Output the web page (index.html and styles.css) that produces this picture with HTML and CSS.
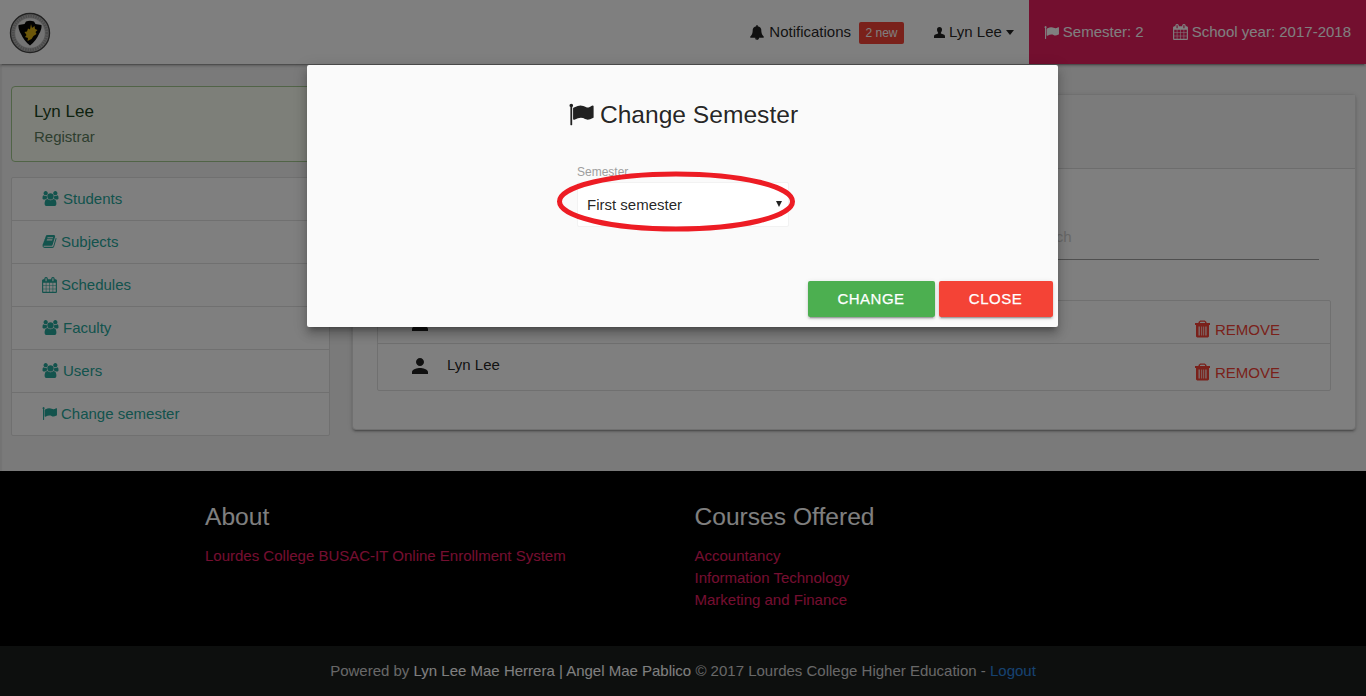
FILE: index.html
```
<!DOCTYPE html>
<html lang="en">
<head>
<meta charset="utf-8">
<title>Enrollment System</title>
<link rel="stylesheet" href="styles.css">
</head>
<body>
<svg class="sprite" aria-hidden="true">
  <symbol id="flag" viewBox="64 0 1792 1792"><path d="M320 256q0 72-64 110v1266q0 13-9.500 22.500t-22.500 9.500h-64q-13 0-22.500-9.500t-9.500-22.500v-1266q-64-38-64-110 0-53 37.500-90.500t90.500-37.500 90.500 37.500 37.500 90.500zM1792 320v763q0 25-12.500 38.500t-39.500 27.500q-215 116-369 116-61 0-123.500-22t-108.500-48-115.500-48-142.500-22q-192 0-464 146-17 9-33 9-26 0-45-19t-19-45v-742q0-32 31-55 21-14 79-43 236-120 421-120 107 0 200 29t219 88q38 19 88 19 54 0 117.500-21t110-47 88-47 54.500-21q26 0 45 19t19 45z"/></symbol>
  <symbol id="calendar" viewBox="64 0 1664 1792"><path d="M192 1664h288v-288h-288v288zm352 0h320v-288h-320v288zm-352-352h288v-320h-288v320zm352 0h320v-320h-320v320zm-352-384h288v-288h-288v288zm736 736h320v-288h-320v288zm-384-736h320v-288h-320v288zm768 736h288v-288h-288v288zm-384-352h320v-320h-320v320zm-352-864v-288q0-13-9.500-22.500t-22.500-9.500h-64q-13 0-22.500 9.500t-9.500 22.500v288q0 13 9.500 22.500t22.500 9.500h64q13 0 22.500-9.500t9.500-22.500zm736 864h288v-320h-288v320zm-384-384h320v-288h-320v288zm384 0h288v-288h-288v288zm32-480v-288q0-13-9.500-22.500t-22.500-9.500h-64q-13 0-22.500 9.500t-9.500 22.500v288q0 13 9.500 22.500t22.500 9.500h64q13 0 22.500-9.500t9.500-22.500zm384-64v1280q0 52-38 90t-90 38h-1408q-52 0-90-38t-38-90v-1280q0-52 38-90t90-38h128v-96q0-66 47-113t113-47h64q66 0 113 47t47 113v96h384v-96q0-66 47-113t113-47h64q66 0 113 47t47 113v96h128q52 0 90 38t38 90z"/></symbol>
  <symbol id="users" viewBox="0 0 1920 1792"><path d="M593 896q-162 5-265 128h-134q-82 0-138-40.500t-56-118.500q0-353 124-353 6 0 43.500 21t97.500 42.500 119 21.500q67 0 133-23-5 37-5 66 0 139 81 256zm1071 637q0 120-73 189.500t-194 69.500h-874q-121 0-194-69.500t-73-189.500q0-53 3.500-103.500t14-109 26.500-108.500 43-97.500 62-81 85.500-53.500 111.500-20q10 0 43 21.500t73 48 107 48 135 21.500 135-21.500 107-48 73-48 43-21.500q61 0 111.500 20t85.500 53.500 62 81 43 97.500 26.500 108.500 14 109 3.500 103.500zm-1024-1277q0 106-75 181t-181 75-181-75-75-181 75-181 181-75 181 75 75 181zm704 384q0 159-112.500 271.500t-271.500 112.500-271.500-112.500-112.500-271.500 112.500-271.500 271.500-112.500 271.500 112.500 112.500 271.500zm576 225q0 78-56 118.500t-138 40.500h-134q-103-123-265-128 81-117 81-256 0-29-5-66 66 23 133 23 59 0 119-21.500t97.500-42.500 43.500-21q124 0 124 353zm-128-609q0 106-75 181t-181 75-181-75-75-181 75-181 181-75 181 75 75 181z"/></symbol>
  <symbol id="book" viewBox="64 0 1664 1792"><path d="M1703 478q40 57 18 129l-275 906q-19 64-76.500 107.500t-122.500 43.500h-923q-77 0-148.500-53.500t-99.500-131.500q-24-67-2-127 0-4 3-27t4-37q1-8-3-21.500t-3-19.500q2-11 8-21t16.500-23.500 16.500-23.500q23-38 45-91.500t30-91.500q3-10 .5-30t-.5-28q3-11 17-28t17-23q21-36 42-92t25-90q1-9-2.500-32t.5-28q4-13 22-30.500t22-22.500q19-26 42.500-84.500t27.500-96.500q1-8-3-25.500t-2-26.500q2-8 9-18t18-23 17-21q8-12 16.500-30.500t15-35 16-36 19.500-32 26.500-23.500 36-11.500 47.500 5.500l-1 3q38-9 51-9h761q74 0 114 56t18 130l-274 906q-36 119-71.500 153.500t-128.500 34.500h-869q-27 0-38 15-11 16-1 43 24 70 144 70h923q29 0 56-15.500t35-41.500l300-987q7-22 5-57 38 15 59 43zm-1064 2q-4 13 2 22.500t20 9.500h608q13 0 25.500-9.500t16.500-22.500l21-64q4-13-2-22.500t-20-9.500h-608q-13 0-25.500 9.500t-16.500 22.500zm-83 256q-4 13 2 22.500t20 9.500h608q13 0 25.500-9.500t16.500-22.500l21-64q4-13-2-22.500t-20-9.500h-608q-13 0-25.500 9.500t-16.500 22.500z"/></symbol>
  <symbol id="bell" viewBox="64 0 1664 1792"><path d="M912 1696q0-16-16-16-59 0-101.500-42.500t-42.500-101.500q0-16-16-16t-16 16q0 73 51.500 124.500t124.500 51.500q16 0 16-16zm816-288q0 52-38 90t-90 38h-448q0 106-75 181t-181 75-181-75-75-181h-448q-52 0-90-38t-38-90q50-42 91-88t85-119.500 74.500-158.500 50-206 19.500-260q0-152 117-282.500t307-158.500q-8-19-8-39 0-40 28-68t68-28 68 28 28 68q0 20-8 39 190 28 307 158.500t117 282.500q0 139 19.500 260t50 206 74.500 158.500 85 119.500 91 88z"/></symbol>
  <symbol id="user" viewBox="0 0 11 11"><path d="M5.500 0C7.200 0 8 1.100 8 2.600c0 1.400-.5 2.500-1.100 3.100v.8l2.700 1C10.600 7.900 11 8.500 11 9.500V11H0V9.500c0-1 .4-1.600 1.400-2l2.700-1v-.8C3.500 5.100 3 4 3 2.600 3 1.100 3.800 0 5.500 0z"/></symbol>
  <symbol id="person" viewBox="0 0 24 24"><path d="M12 12c2.210 0 4-1.790 4-4s-1.790-4-4-4-4 1.790-4 4 1.790 4 4 4zm0 2c-2.670 0-8 1.340-8 4v2h16v-2c0-2.660-5.330-4-8-4z"/></symbol>
  <symbol id="trash" viewBox="0 0 15 18"><path fill-rule="evenodd" d="M3.500 3V2L5.200.4h4.600L11.500 2v1H15v2h-1v11.400l-1.100 1.100H2.100L1 16.400V5H0V3zM5 3h5v-.7l-.7-.6H5.700l-.7.600zM3.600 6.500v9h1.100v-9zm2.800 0v9h.7v-9zm2 0v9h.7v-9zm2 0v9h1.100v-9z"/></symbol>
</svg>

<header class="navbar">
  <svg class="logo" viewBox="0 0 42 42">
    <circle cx="21" cy="21" r="19.500" fill="#b8b8b8" stroke="#454545" stroke-width="1.400"/>
    <circle cx="21" cy="21" r="17" fill="none" stroke="#989898" stroke-width="3" stroke-dasharray="1.500 1"/>
    <circle cx="21" cy="21" r="14.800" fill="#e6e6e6"/>
    <path d="M17 9.500q4-1.500 8 0l1.500 2.500 6 1q.5 4-2.500 9-3 7-9 11.500Q15 29 12 22q-3-5-2.500-9l6-1z" fill="#050505"/>
    <path d="m22 12 1 4 2.500-2 .5 3 2.500 1-2 2 1 2-3 2-2 3-4 2 .5-3-3-1 1.500-2-2-3 2.500-.5 1-3 2 1z" fill="#d9ae13"/>
  </svg>
  <nav class="nav">
    <a class="nav-item notify"><svg class="i-bell"><use href="#bell"/></svg>Notifications<span class="badge">2 new</span></a>
    <a class="nav-item"><svg class="i-user"><use href="#user"/></svg>Lyn Lee<span class="caret"></span></a>
    <a class="nav-item pink"><svg class="i-flag"><use href="#flag"/></svg>Semester: 2</a>
    <a class="nav-item pink year"><svg class="i-cal"><use href="#calendar"/></svg>School year: 2017-2018</a>
  </nav>
</header>

<main class="main">
  <aside class="side">
    <div class="profile">
      <div class="profile-name">Lyn Lee</div>
      <div class="profile-role">Registrar</div>
    </div>
    <div class="menu">
      <a class="menu-item"><svg class="i-users"><use href="#users"/></svg>Students</a>
      <a class="menu-item"><svg class="i-book"><use href="#book"/></svg>Subjects</a>
      <a class="menu-item"><svg class="i-cal"><use href="#calendar"/></svg>Schedules</a>
      <a class="menu-item"><svg class="i-users"><use href="#users"/></svg>Faculty</a>
      <a class="menu-item"><svg class="i-users"><use href="#users"/></svg>Users</a>
      <a class="menu-item"><svg class="i-flag"><use href="#flag"/></svg>Change semester</a>
    </div>
  </aside>
  <section class="card">
    <div class="card-head"></div>
    <div class="card-body">
      <div class="search">Search</div>
      <div class="list">
        <div class="row"><svg class="i-person"><use href="#person"/></svg><span class="row-name"></span><a class="remove"><svg class="i-trash"><use href="#trash"/></svg><span>REMOVE</span></a></div>
        <div class="row last"><svg class="i-person"><use href="#person"/></svg><span class="row-name">Lyn Lee</span><a class="remove"><svg class="i-trash"><use href="#trash"/></svg><span>REMOVE</span></a></div>
      </div>
    </div>
  </section>
</main>

<footer class="footer">
  <div class="footer-cols">
    <div>
      <h5 class="footer-title">About</h5>
      <a class="footer-link">Lourdes College BUSAC-IT Online Enrollment System</a>
    </div>
    <div>
      <h5 class="footer-title">Courses Offered</h5>
      <a class="footer-link">Accountancy</a>
      <a class="footer-link">Information Technology</a>
      <a class="footer-link">Marketing and Finance</a>
    </div>
  </div>
  <div class="copyright"><p>Powered by <span class="names">Lyn Lee Mae Herrera | Angel Mae Pablico</span> © 2017 Lourdes College Higher Education - <a class="logout">Logout</a></p></div>
</footer>

<div class="overlay"></div>
<div class="modal">
  <h4 class="modal-title"><svg class="i-flag-lg"><use href="#flag"/></svg>Change Semester</h4>
  <div class="field">
    <div class="label">Semester</div>
    <div class="select"><span>First semester</span><span class="arrow"></span></div>
  </div>
  <div class="actions"><a class="btn green">CHANGE</a><a class="btn red">CLOSE</a></div>
  <svg class="ring" viewBox="0 0 240 62"><ellipse cx="120" cy="31.500" rx="116.500" ry="27.500"/></svg>
</div>
</body>
</html>
```
FILE: styles.css
```
* { box-sizing: border-box; }
body {
  margin: 0;
  height: 696px;
  overflow: hidden;
  background: #f4f4f4;
  color: rgba(0, 0, 0, .87);
  font: 15px/22px "Liberation Sans", Arial, sans-serif;
}
svg { fill: currentColor; flex: none; display: block; }
.sprite { position: absolute; width: 0; height: 0; }

.i-bell { width: 14px; height: 15px; margin-right: 5px; }
.i-user { width: 11px; height: 11px; margin-right: 4px; }
.i-flag { width: 16px; height: 15px; margin-right: 3px; }
.i-cal { width: 15px; height: 16px; margin-right: 4px; }
.i-book { width: 15px; height: 15px; margin-right: 4px; }
.i-users { width: 17px; height: 15px; margin-right: 4px; }
.i-person { width: 24px; height: 24px; }
.i-trash { width: 15px; height: 18px; margin-right: 5px; }
.i-flag-lg { width: 26px; height: 25px; margin-right: 5px; }

/* Top bar */
.navbar {
  position: relative;
  display: flex;
  justify-content: space-between;
  height: 64px;
  padding-left: 9px;
  background: #fff;
  box-shadow: 0 2px 2px 0 rgba(0,0,0,.14), 0 1px 5px 0 rgba(0,0,0,.12), 0 3px 1px -2px rgba(0,0,0,.2);
}
.logo { width: 42px; height: 42px; margin-top: 12px; }
.nav { display: flex; }
.nav-item { display: flex; align-items: center; padding: 0 15px; }
.pink { background: #e61e5f; color: #fff; }
.year { padding-left: 14px; }
.badge {
  width: 45px;
  height: 22px;
  margin: 1px 0 0 8px;
  border-radius: 2px;
  background: #f44336;
  color: #fff;
  font-size: 12px;
  text-align: center;
}
.caret { margin-left: 4px; border: 4.500px solid transparent; border-top: 5px solid currentColor; border-bottom: 0; }

/* Page body */
.main {
  display: flex;
  gap: 22px;
  height: 407px;
  padding: 22px 10px 0 11px;
  box-shadow: inset 2px 0 1px rgba(0,0,0,.05);
}
.side { width: 319px; }
.profile {
  height: 76px;
  padding: 13px 22px;
  border: 1px solid #a3c98f;
  border-radius: 4px;
  background: #fbfff3;
  color: #5b7c5d;
}
.profile-name { color: #1b4420; font-size: 17px; line-height: 24px; margin-bottom: 2px; }
.menu { margin-top: 15px; border: 1px solid #e0e0e0; border-radius: 2px; background: #fff; }
.menu-item {
  display: flex;
  align-items: center;
  height: 43px;
  padding: 0 30px;
  border-bottom: 1px solid #e0e0e0;
  color: #26a69a;
}
.menu-item svg { margin-bottom: 1px; }
.menu-item:last-child { height: 42px; padding-bottom: 1px; border-bottom: 0; }
.card {
  flex: 1;
  height: 336px;
  margin-top: 8px;
  border: 1px solid #e0e0e0;
  border-radius: 4px;
  background: #fff;
  box-shadow: 0 2px 2px 0 rgba(0,0,0,.14), 0 1px 5px 0 rgba(0,0,0,.12), 0 3px 1px -2px rgba(0,0,0,.2);
}
.card-head { height: 74px; border-bottom: 1px solid #dadada; background: #f7f7f7; }
.card-body { padding: 46px 24px 0; }
.search {
  width: 296px;
  height: 45px;
  margin: 0 12px 40px auto;
  padding-left: 1px;
  border-bottom: 1px solid #9e9e9e;
  color: #d1d1d1;
  line-height: 43px;
}
.list { border: 1px solid #e0e0e0; border-radius: 2px; }
.row { display: flex; height: 43px; padding: 10px 50px 0 30px; border-bottom: 1px solid #e0e0e0; }
.last { height: 46px; border-bottom: 0; }
.row-name { flex: 1; padding-left: 15px; }
.remove { display: flex; height: 18px; margin-top: 9px; align-items: center; color: #f44336; }
.remove span { padding-top: 2px; }

/* Footer */
.footer { height: 225px; background: #000; color: #fff; }
.footer-cols { display: grid; grid-template-columns: 489.500px 1fr; height: 175px; padding: 32px 205px 0; }
.footer-title { margin: 0 0 15px; font-size: 24.600px; line-height: 27px; font-weight: 400; }
.footer-link { display: block; color: #e91e63; }
.copyright { height: 50px; background: #1a1e1d; color: #d0d0d0; text-align: center; line-height: 50px; }
.copyright p { margin: 0; }
.names { color: #fff; }
.logout { color: #2c86e0; }

/* Dialog */
.overlay { position: absolute; inset: 0; background: #000; opacity: .5; }
.modal {
  position: absolute;
  left: 307px;
  top: 65px;
  width: 751px;
  height: 262px;
  border-radius: 2px;
  background: #fafafa;
  box-shadow: 0 8px 10px 1px rgba(0,0,0,.14), 0 3px 14px 2px rgba(0,0,0,.12), 0 5px 5px -3px rgba(0,0,0,.3);
}
.modal-title {
  display: flex;
  align-items: center;
  justify-content: center;
  margin: 36px 0 0;
  padding-left: 2px;
  font-size: 24.600px;
  line-height: 27px;
  font-weight: 400;
}
.field { width: 212px; margin: 36px 0 0 270px; }
.label { color: #9e9e9e; font-size: 12px; line-height: 16px; }
.select {
  display: flex;
  align-items: center;
  justify-content: space-between;
  height: 45px;
  margin-top: 2px;
  padding: 0 6px 0 9px;
  border: 1px solid #f2f2f2;
  border-radius: 2px;
  background: #fff;
}
.arrow { border: 3.500px solid transparent; border-top: 6px solid #222; border-bottom: 0; margin-top: -1px; }
.actions { display: flex; justify-content: flex-end; gap: 4px; padding: 54px 5px 0; }
.btn {
  width: 127px;
  height: 36px;
  padding-right: 1px;
  border-radius: 2px;
  color: #fff;
  letter-spacing: .5px;
  line-height: 35px;
  text-align: center;
  -webkit-text-stroke: .25px #fff;
  box-shadow: 0 2px 2px 0 rgba(0,0,0,.14), 0 1px 5px 0 rgba(0,0,0,.12), 0 3px 1px -2px rgba(0,0,0,.2);
}
.green { background: #4caf50; }
.red { width: 114px; background: #f44336; }
.ring { position: absolute; left: 249px; top: 105px; width: 240px; height: 62px; fill: none; stroke: #ed1c24; stroke-width: 5; }
```
